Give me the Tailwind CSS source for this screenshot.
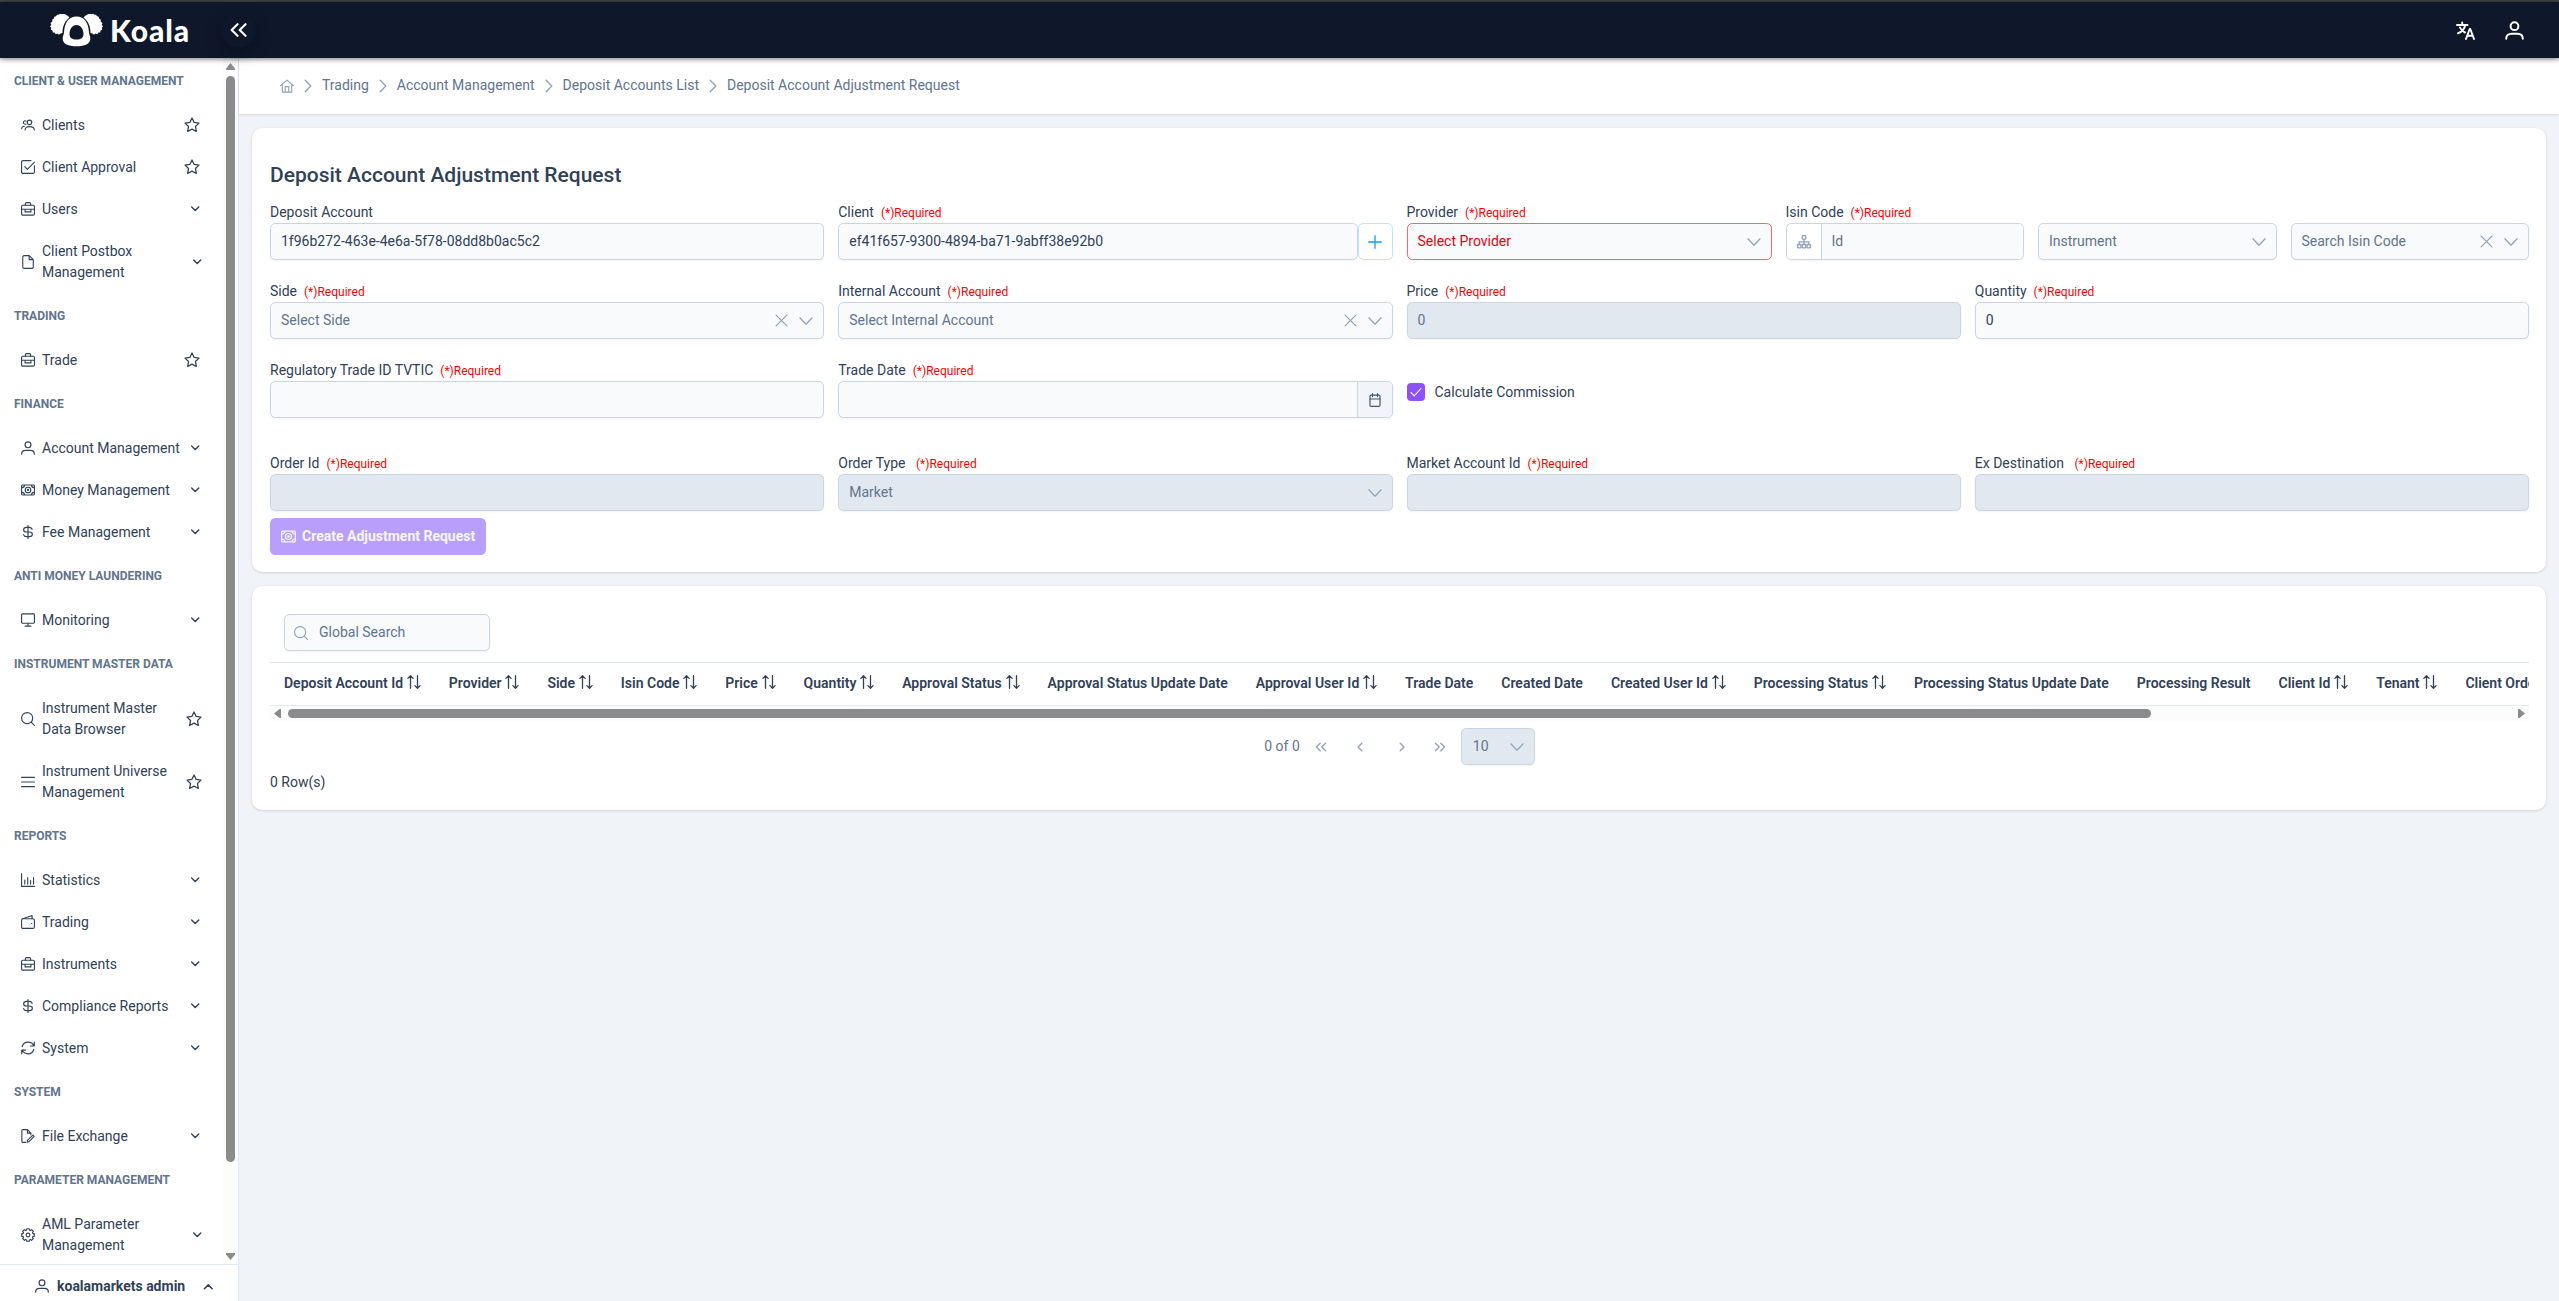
<!DOCTYPE html>
<html lang="en" class="text-[14px]">
<head>
    <meta charset="UTF-8">
    <meta name="viewport" content="width=device-width, initial-scale=1.0">
    <title>Deposit Account Adjustment Request - Koala</title>
    <script src="https://cdn.jsdelivr.net/npm/@tailwindcss/browser@4"></script>
</head>
<body class="h-screen overflow-hidden bg-[#f0f3f8] font-[Roboto,sans-serif] text-base leading-[21px] text-slate-700 flex flex-col">
    <!-- Icon sprite -->
    <svg class="hidden">
        <symbol id="i-users" viewBox="0 0 24 24" fill="none" stroke="currentColor" stroke-width="1.9" stroke-linecap="round" stroke-linejoin="round"><circle cx="14.5" cy="7.5" r="3.800"/><path d="M7 20.500c0-4 3-5.800 7.500-5.800s8.300 1.800 8.300 5.800M8.800 5.300a3 3 0 1 0-.6 5.200M1.200 18.500c0-3 1.800-4.300 4.800-4.300"/></symbol>
        <symbol id="i-check-square" viewBox="0 0 24 24" fill="none" stroke="currentColor" stroke-width="1.900" stroke-linecap="round" stroke-linejoin="round"><path d="M17 1H3.500A2.500 2.500 0 0 0 1 3.500v17A2.500 2.500 0 0 0 3.500 23h17a2.500 2.500 0 0 0 2.500-2.500V10"/><path d="M6.500 11.500l4.500 4.500L23 3.500"/></symbol>
        <symbol id="i-briefcase" viewBox="0 0 24 24" fill="none" stroke="currentColor" stroke-width="1.900" stroke-linecap="round" stroke-linejoin="round"><rect x="1" y="5.500" width="22" height="17" rx="2"/><path d="M7.500 5.500V3a2 2 0 0 1 2-2h5a2 2 0 0 1 2 2v2.500M1 12.500h22M7 12.500v4.500h10v-4.500"/></symbol>
        <symbol id="i-file" viewBox="0 0 24 24" fill="none" stroke="currentColor" stroke-width="1.900" stroke-linecap="round" stroke-linejoin="round"><path d="M14 1H5.500A2.500 2.500 0 0 0 3 3.500v17A2.500 2.500 0 0 0 5.500 23h13a2.500 2.500 0 0 0 2.500-2.500V8zM14 1v7h7"/></symbol>
        <symbol id="i-user" viewBox="0 0 24 24" fill="none" stroke="currentColor" stroke-width="2" stroke-linecap="round"><circle cx="12" cy="6.500" r="5"/><path d="M1.200 22.500v-1C1.200 18 4 16 8 16h8c4 0 6.800 2 6.800 5.500v1"/></symbol>
        <symbol id="i-money" viewBox="0 0 24 24" fill="none" stroke="currentColor" stroke-width="1.900" stroke-linejoin="round"><rect x="1" y="3.500" width="22" height="17" rx="1.500"/><circle cx="12" cy="12" r="4.800"/><circle cx="12" cy="12" r="1"/><path d="M1 8c3 0 5-1.500 5-4.500M23 8c-3 0-5-1.500-5-4.500M1 16c3 0 5 1.500 5 4.500M23 16c-3 0-5 1.500-5 4.500"/></symbol>
        <symbol id="i-dollar" viewBox="0 0 24 24" fill="none" stroke="currentColor" stroke-width="2" stroke-linecap="round"><path d="M12 1v22M19 7.500C18.500 5 16.500 4 14 4h-4.500C6.500 4 4.500 5.500 4.500 8s2 4 5 4h5c3 0 5 1.500 5 4s-2 4-5 4h-5C7 20 5 19 4.500 16.500"/></symbol>
        <symbol id="i-desktop" viewBox="0 0 24 24" fill="none" stroke="currentColor" stroke-width="1.900" stroke-linecap="round" stroke-linejoin="round"><rect x="1" y="1.500" width="22" height="16" rx="1.500"/><path d="M12 17.500V22.500M7 22.500h10"/></symbol>
        <symbol id="i-search" viewBox="0 0 24 24" fill="none" stroke="currentColor" stroke-width="1.900" stroke-linecap="round"><circle cx="10.500" cy="10.500" r="9.500"/><path d="M17.500 17.500L23 23"/></symbol>
        <symbol id="i-bars" viewBox="0 0 24 24" fill="none" stroke="currentColor" stroke-width="2" stroke-linecap="round"><path d="M1 4h22M1 12h22M1 20h22"/></symbol>
        <symbol id="i-chart" viewBox="0 0 24 24" fill="none" stroke="currentColor" stroke-width="1.900" stroke-linecap="round"><path d="M1 1v22h22M6.500 12v7M11.500 8v11M16.500 13v6M21.500 8v11"/></symbol>
        <symbol id="i-wallet" viewBox="0 0 24 24" fill="none" stroke="currentColor" stroke-width="1.900" stroke-linecap="round" stroke-linejoin="round"><rect x="1" y="6.500" width="22" height="16.500" rx="2.500"/><path d="M3 6.500L19 1v5.500M17.800 14.500h.8"/></symbol>
        <symbol id="i-sync" viewBox="0 0 24 24" fill="none" stroke="currentColor" stroke-width="2" stroke-linecap="round" stroke-linejoin="round"><path d="M2 9.500C3.500 4.500 7.500 2 12 2c4.500 0 8 2 10.500 6.500M22.700 2v6.500H16M22 14.500C20.500 19.500 16.500 22 12 22c-4.500 0-8-2-10.500-6.500M1.300 22v-6.500H8"/></symbol>
        <symbol id="i-file-edit" viewBox="0 0 24 24" fill="none" stroke="currentColor" stroke-width="1.900" stroke-linecap="round" stroke-linejoin="round"><path d="M8 23H3.500A2 2 0 0 1 1.500 21V3A2 2 0 0 1 3.500 1H11l6 6v3M11 1v6h6M20.500 10.500l2 2L14 21.500l-3.500 1 .8-3.500z"/></symbol>
        <symbol id="i-cog" viewBox="0 0 24 24" fill="none" stroke="currentColor" stroke-width="1.900" stroke-linejoin="round"><circle cx="12" cy="12" r="3.200"/><path d="M20.400 9.600L22.800 9.700V14.300L20.400 14.400L19.600 16.200L21.200 18L18 21.200L16.200 19.600L14.400 20.400L14.300 22.800H9.700L9.600 20.400L7.800 19.600L6 21.200L2.800 18L4.400 16.200L3.600 14.400L1.200 14.300V9.700L3.600 9.600L4.400 7.800L2.800 6L6 2.800L7.800 4.400L9.600 3.600L9.700 1.200H14.300L14.400 3.600L16.200 4.400L18 2.800L21.200 6L19.600 7.800z"/></symbol>
        <symbol id="i-star" viewBox="0 0 24 24" fill="none" stroke="currentColor" stroke-width="1.900" stroke-linejoin="round"><path d="M12 1.500l3.200 6.700 7.300 1-5.300 5.100 1.300 7.400L12 18.200l-6.500 3.500 1.300-7.400L1.500 9.200l7.300-1z"/></symbol>
        <symbol id="i-down" viewBox="0 0 24 24" fill="none" stroke="currentColor" stroke-width="2.100" stroke-linecap="round" stroke-linejoin="round"><path d="M1.500 6.500L12 17.500L22.500 6.500"/></symbol>
        <symbol id="i-down-bold" viewBox="0 0 24 24" fill="none" stroke="currentColor" stroke-width="3.400" stroke-linecap="round" stroke-linejoin="round"><path d="M4 7l8.500 8.500L21 7"/></symbol>
        <symbol id="i-x" viewBox="0 0 24 24" fill="none" stroke="currentColor" stroke-width="2.200" stroke-linecap="round"><path d="M2 2l20 20M22 2L2 22"/></symbol>
        <symbol id="i-right" viewBox="0 0 14 14" fill="none" stroke="currentColor" stroke-width="1.300" stroke-linecap="round" stroke-linejoin="round"><path d="M4.200 1.300l5.600 5.700l-5.600 5.700"/></symbol>
        <symbol id="i-angle" viewBox="0 0 14 14" fill="none" stroke="currentColor" stroke-width="1.300" stroke-linecap="round" stroke-linejoin="round"><path d="M5.200 3.200L9 7l-3.800 3.800"/></symbol>
        <symbol id="i-angles" viewBox="0 0 14 14" fill="none" stroke="currentColor" stroke-width="1.300" stroke-linecap="round" stroke-linejoin="round"><path d="M2.400 3.200L6.200 7l-3.800 3.800M7.800 3.200L11.600 7l-3.800 3.800"/></symbol>
        <symbol id="i-sort" viewBox="0 0 14 14" fill="none" stroke="currentColor" stroke-width="1.300" stroke-linecap="round" stroke-linejoin="round"><path d="M3.500 13.300V.8M.9 3.400L3.500.8l2.600 2.600M10.500.7v12.500M7.900 10.600l2.600 2.600l2.600-2.600"/></symbol>
    </svg>

    <div class="h-[2px] shrink-0 bg-[#434343]"></div>

    <!-- Topbar -->
    <header class="relative z-10 flex h-14 min-h-[56px] shrink-0 items-center bg-slate-900 text-white shadow-[0_1px_5px_rgba(0,0,0,0.55)]">
        <div class="flex w-[221px] items-center pl-[49px]">
            <svg class="h-[34px] w-[55px] shrink-0" viewBox="0 0 55 34">
                <path fill="#fff" d="M19 3C17 1 14 .6 12 1.200L11 .8 9.500 1.800 8 1.800 7 3.200 5.300 3.800 4.900 5.500 3.200 6.800 3.300 8.500 1.500 10l.8 1.700L1 13.500l1.300 1.300-.5 1.900 1.700.8.300 2 1.700.1 1.300 1.700 1.600-.7 1.600 1.100L11.500 20.500 13.500 20C13.500 14 15 9 20.500 4.500z"/>
                <path fill="#fff" d="M36 3C38 1 41 .6 43 1.200L44 .8 45.500 1.800 47 1.800 48 3.200 49.700 3.800 50.100 5.500 51.800 6.800 51.700 8.500 53.500 10l-.8 1.700L54 13.500l-1.300 1.300.5 1.900-1.700.8-.3 2-1.700.1-1.300 1.700-1.600-.7-1.600 1.100L43.500 20.500 41.500 20C41.500 14 40 9 34.500 4.500z"/>
                <path fill="#fff" fill-rule="evenodd" d="M27.500 3.500c-8 0-12 6.500-12.500 16-.3 3-1.300 3-1.300 6 0 5.500 5.500 7.800 13.800 7.800s13.800-2.300 13.800-7.800c0-3-1-3-1.300-6-.5-9.500-4.500-16-12.500-16zm0 8.500c4.500 0 7 4.500 7 9 0 3.800-2.500 5.500-7 5.500s-7-1.700-7-5.500c0-4.500 2.500-9 7-9z"/>
            </svg>
            <span class="ml-[6px] font-[Lato,sans-serif] text-[30px] leading-[34px] font-black tracking-[0.9px]">Koala</span>
        </div>
        <button class="flex size-[35px] items-center justify-center rounded-full bg-slate-900 shadow-[0_6px_16px_rgba(0,0,0,0.3)]">
            <svg class="h-[14px] w-[17px]" viewBox="0 0 17 14" fill="none" stroke="currentColor" stroke-width="2.200" stroke-linecap="round" stroke-linejoin="round"><path d="M7.500 1.200L1.700 7l5.800 5.800M15.500 1.200L9.700 7l5.800 5.800"/></svg>
        </button>
        <div class="ml-auto flex items-center gap-[30px] pr-[35px]">
            <svg class="h-[19px] w-[19px]" viewBox="0 0 19 19" fill="none" stroke="currentColor" stroke-width="1.900" stroke-linecap="round" stroke-linejoin="round"><path d="M1 4h10.500M6.200 1.500V4M9.300 4C8.500 8 5.500 11 2 12.300M4 6.500c1 2.500 2.500 4 5 5M10 18l3.700-10h.6L18 18M11.300 14.800h5.400"/></svg>
            <svg class="h-[19px] w-[19px]" viewBox="0 0 19 19" fill="none" stroke="currentColor" stroke-width="2" stroke-linecap="round"><circle cx="9.500" cy="5.200" r="3.900"/><path d="M1.200 17.700c0-3.200 2-5 5.300-5h6c3.300 0 5.300 1.800 5.300 5"/></svg>
        </div>
    </header>

    <div class="flex min-h-0 flex-1">
        <!-- Sidebar -->
        <aside class="flex w-[239px] shrink-0 flex-col border-r border-slate-200 bg-white">
            <div class="flex min-h-0 flex-1">
                <nav id="menu" class="w-[223px] shrink-0 overflow-hidden"></nav>
                <div class="flex w-[15px] flex-col items-center bg-[#fcfcfc] pt-[5px] pb-[4px]">
                    <svg class="h-[7px] w-[9px] fill-[#8b8b8b]" viewBox="0 0 9 7"><path d="M4.500 0L9 5.500V7H0V5.500z"/></svg>
                    <div class="mt-[6px] h-[1086px] w-[9px] rounded-full bg-[#8b8b8b]"></div>
                    <svg class="mt-auto h-[7px] w-[9px] fill-[#8b8b8b]" viewBox="0 0 9 7"><path d="M4.500 7L9 1.500V0H0v1.500z"/></svg>
                </div>
            </div>
            <div class="flex h-[37px] shrink-0 items-center border-t border-slate-200 pt-[6px] pl-[35px] font-bold">
                <svg class="size-[14px]"><use href="#i-user"/></svg>
                <span class="ml-[8px] w-[146px]">koalamarkets admin</span>
                <svg class="h-[11px] w-[11px] rotate-180"><use href="#i-down-bold"/></svg>
            </div>
        </aside>

        <main class="flex min-w-0 flex-1 flex-col">
            <!-- Breadcrumb -->
            <div class="flex h-[56px] shrink-0 items-center bg-white pb-[1px] pl-[41px] text-slate-500 shadow-[0_1px_2px_rgba(0,0,0,0.12)]">
                <svg class="size-[14px] text-slate-400" viewBox="0 0 24 24" fill="none" stroke="currentColor" stroke-width="1.900" stroke-linecap="round" stroke-linejoin="round"><path d="M1 11.500L12 2l11 9.500M4 9.500V22.500h16V9.500M9 22.500V13h6v9.500"/></svg>
                <svg class="mx-[7px] size-[14px] text-slate-400"><use href="#i-right"/></svg>
                <span>Trading</span>
                <svg class="mx-[7px] size-[14px] text-slate-400"><use href="#i-right"/></svg>
                <span>Account Management</span>
                <svg class="mx-[7px] size-[14px] text-slate-400"><use href="#i-right"/></svg>
                <span>Deposit Accounts List</span>
                <svg class="mx-[7px] size-[14px] text-slate-400"><use href="#i-right"/></svg>
                <span>Deposit Account Adjustment Request</span>
            </div>

            <!-- Request form -->
            <section class="mt-4 mr-[13px] ml-[13px] h-[444px] shrink-0 rounded-xl bg-white pt-[31px] pr-[17px] pl-[18px] shadow-[0_1px_3px_rgba(0,0,0,0.14)]">
                <h1 class="text-[21px] leading-[32px] font-medium">Deposit Account Adjustment Request</h1>
                <div class="mt-[11px] grid grid-cols-4 gap-x-4 gap-y-[21px]">
                    <div>
                        <label class="block h-[21px]">Deposit Account</label>
                        <div class="flex h-[37px] items-center rounded-md border border-slate-300 bg-slate-50 px-[10px] shadow-xs">1f96b272-463e-4e6a-5f78-08dd8b0ac5c2</div>
                    </div>
                    <div>
                        <label class="block h-[21px]">Client <span class="ml-1 text-[12px] text-[#ff0000]">(*)Required</span></label>
                        <div class="flex">
                            <div class="flex h-[37px] flex-1 items-center rounded-md border border-slate-300 bg-slate-50 px-[10px] shadow-xs">ef41f657-9300-4894-ba71-9abff38e92b0</div>
                            <button class="flex h-[37px] w-[35px] items-center justify-center rounded-md border border-sky-200 text-sky-500">
                                <svg class="size-[14px]" viewBox="0 0 14 14" stroke="currentColor" stroke-width="1.300" stroke-linecap="round"><path d="M7 .7v12.600M.7 7h12.600"/></svg>
                            </button>
                        </div>
                    </div>
                    <div class="col-span-2 flex gap-4">
                        <div class="w-[365px]">
                            <label class="block h-[21px]">Provider <span class="ml-1 text-[12px] text-[#ff0000]">(*)Required</span></label>
                            <div class="flex h-[37px] items-center rounded-md border border-red-400 bg-slate-50 px-[10px] text-red-600 shadow-xs">
                                <span class="flex-1">Select Provider</span>
                                <svg class="size-[14px] text-slate-400"><use href="#i-down"/></svg>
                            </div>
                        </div>
                        <div class="flex-1">
                            <label class="block h-[21px]">Isin Code <span class="ml-1 text-[12px] text-[#ff0000]">(*)Required</span></label>
                            <div class="grid grid-cols-3 gap-4 text-slate-500">
                                <div class="flex h-[37px] rounded-md border border-slate-300 shadow-xs">
                                    <div class="flex w-[35px] items-center justify-center border-r border-slate-300 text-slate-400">
                                        <svg class="size-[14px]" viewBox="0 0 14 14" fill="none" stroke="currentColor" stroke-width="1.300"><rect x="5.200" y=".7" width="3.600" height="3.400" rx=".5"/><rect x=".6" y="9.500" width="3.400" height="3.400" rx=".5"/><rect x="5.300" y="9.500" width="3.400" height="3.400" rx=".5"/><rect x="10" y="9.500" width="3.400" height="3.400" rx=".5"/><path d="M7 4.100v5.400M2.300 9.500V6.800h9.400v2.700"/></svg>
                                    </div>
                                    <div class="flex flex-1 items-center rounded-r-md bg-slate-50 px-[10px]">Id</div>
                                </div>
                                <div class="flex h-[37px] items-center rounded-md border border-slate-300 bg-slate-50 px-[10px] shadow-xs">
                                    <span class="flex-1">Instrument</span>
                                    <svg class="size-[14px] text-slate-400"><use href="#i-down"/></svg>
                                </div>
                                <div class="flex h-[37px] items-center rounded-md border border-slate-300 bg-slate-50 px-[10px] shadow-xs">
                                    <span class="flex-1">Search Isin Code</span>
                                    <svg class="mr-[11px] size-[13px] text-slate-400"><use href="#i-x"/></svg>
                                    <svg class="size-[14px] text-slate-400"><use href="#i-down"/></svg>
                                </div>
                            </div>
                        </div>
                    </div>

                    <div>
                        <label class="block h-[21px]">Side <span class="ml-1 text-[12px] text-[#ff0000]">(*)Required</span></label>
                        <div class="flex h-[37px] items-center rounded-md border border-slate-300 bg-slate-50 px-[10px] text-slate-500 shadow-xs">
                            <span class="flex-1">Select Side</span>
                            <svg class="mr-[11px] size-[13px] text-slate-400"><use href="#i-x"/></svg>
                            <svg class="size-[14px] text-slate-400"><use href="#i-down"/></svg>
                        </div>
                    </div>
                    <div>
                        <label class="block h-[21px]">Internal Account <span class="ml-1 text-[12px] text-[#ff0000]">(*)Required</span></label>
                        <div class="flex h-[37px] items-center rounded-md border border-slate-300 bg-slate-50 px-[10px] text-slate-500 shadow-xs">
                            <span class="flex-1">Select Internal Account</span>
                            <svg class="mr-[11px] size-[13px] text-slate-400"><use href="#i-x"/></svg>
                            <svg class="size-[14px] text-slate-400"><use href="#i-down"/></svg>
                        </div>
                    </div>
                    <div>
                        <label class="block h-[21px]">Price <span class="ml-1 text-[12px] text-[#ff0000]">(*)Required</span></label>
                        <div class="flex h-[37px] items-center rounded-md border border-slate-300 bg-slate-200 px-[10px] text-slate-500 shadow-xs">0</div>
                    </div>
                    <div>
                        <label class="block h-[21px]">Quantity <span class="ml-1 text-[12px] text-[#ff0000]">(*)Required</span></label>
                        <div class="flex h-[37px] items-center rounded-md border border-slate-300 bg-slate-50 px-[10px] shadow-xs">0</div>
                    </div>

                    <div>
                        <label class="block h-[21px]">Regulatory Trade ID TVTIC <span class="ml-1 text-[12px] text-[#ff0000]">(*)Required</span></label>
                        <div class="h-[37px] rounded-md border border-slate-300 bg-slate-50 shadow-xs"></div>
                    </div>
                    <div>
                        <label class="block h-[21px]">Trade Date <span class="ml-1 text-[12px] text-[#ff0000]">(*)Required</span></label>
                        <div class="flex h-[37px] overflow-hidden rounded-md border border-slate-300 bg-slate-50 shadow-xs">
                            <div class="flex-1"></div>
                            <button class="flex w-[35px] items-center justify-center border-l border-slate-300 bg-slate-100 text-slate-600">
                                <svg class="size-[14px]" viewBox="0 0 14 14" fill="none" stroke="currentColor" stroke-width="1.200" stroke-linecap="round"><rect x="2" y="2.200" width="10" height="11.200" rx="1.200"/><path d="M2 6h10M4.500.6v3M9.500.6v3"/></svg>
                            </button>
                        </div>
                    </div>
                    <div class="col-span-2 flex items-start pt-[23px]">
                        <span class="flex size-[18px] items-center justify-center rounded-[4px] bg-violet-500 text-white">
                            <svg class="size-[12px]" viewBox="0 0 12 12" fill="none" stroke="currentColor" stroke-width="1.100" stroke-linecap="round" stroke-linejoin="round"><path d="M1 6.500l3.200 3.300L11 2.500"/></svg>
                        </span>
                        <span class="ml-[10px] leading-[19px]">Calculate Commission</span>
                    </div>

                    <div class="mt-4">
                        <label class="block h-[21px]">Order Id <span class="ml-1 text-[12px] text-[#ff0000]">(*)Required</span></label>
                        <div class="h-[37px] rounded-md border border-slate-300 bg-slate-200 shadow-xs"></div>
                    </div>
                    <div class="mt-4">
                        <label class="block h-[21px]">Order Type <span class="ml-2 text-[12px] text-[#ff0000]">(*)Required</span></label>
                        <div class="flex h-[37px] items-center rounded-md border border-slate-300 bg-slate-200 px-[10px] text-slate-500 shadow-xs">
                            <span class="flex-1">Market</span>
                            <svg class="size-[14px] text-slate-400"><use href="#i-down"/></svg>
                        </div>
                    </div>
                    <div class="mt-4">
                        <label class="block h-[21px]">Market Account Id <span class="ml-1 text-[12px] text-[#ff0000]">(*)Required</span></label>
                        <div class="h-[37px] rounded-md border border-slate-300 bg-slate-200 shadow-xs"></div>
                    </div>
                    <div class="mt-4">
                        <label class="block h-[21px]">Ex Destination <span class="ml-2 text-[12px] text-[#ff0000]">(*)Required</span></label>
                        <div class="h-[37px] rounded-md border border-slate-300 bg-slate-200 shadow-xs"></div>
                    </div>
                </div>
                <button class="mt-[7px] flex h-[37px] w-[216px] items-center gap-[6px] rounded-md bg-[#b89ffb] pl-[11px] font-bold text-white/90">
                    <svg class="size-[15px]"><use href="#i-money"/></svg>
                    <span class="whitespace-nowrap">Create Adjustment Request</span>
                </button>
            </section>

            <!-- Requests table -->
            <section class="mx-[13px] mt-4 h-[224px] shrink-0 rounded-xl bg-white pt-[28px] pr-[17px] pl-[18px] shadow-[0_1px_3px_rgba(0,0,0,0.14)]">
                <div class="ml-4 flex h-[37px] w-[206px] items-center rounded-md border border-slate-300 bg-slate-50 px-[9px] text-slate-500 shadow-xs">
                    <svg class="size-[14px] text-slate-400"><use href="#i-search"/></svg>
                    <span class="ml-[11px]">Global Search</span>
                </div>
                <div class="mt-[11px] overflow-hidden border-y border-slate-200">
                    <div id="columns" class="flex h-[42px] w-max items-center pb-[2px] font-semibold"></div>
                </div>
                <div class="flex h-[15px] items-center bg-[#fcfcfc] pr-[4px] pl-[4px]">
                    <svg class="h-[9px] w-[7px] fill-[#8b8b8b]" viewBox="0 0 7 9"><path d="M0 4.500L5.500 0H7v9H5.500z"/></svg>
                    <div class="ml-[7px] h-[9px] w-[1863px] rounded-full bg-[#8b8b8b]"></div>
                    <svg class="ml-auto h-[9px] w-[7px] fill-[#8b8b8b]" viewBox="0 0 7 9"><path d="M7 4.500L1.500 0H0v9h1.500z"/></svg>
                </div>
                <div class="mt-[7px] flex items-center justify-center text-slate-500">
                    <span class="mr-[14px]">0 of 0</span>
                    <svg class="mr-[25px] size-[14px] rotate-180 text-slate-400"><use href="#i-angles"/></svg>
                    <svg class="mr-[28px] size-[14px] rotate-180 text-slate-400"><use href="#i-angle"/></svg>
                    <svg class="mr-[24px] size-[14px] text-slate-400"><use href="#i-angle"/></svg>
                    <svg class="mr-[14px] size-[14px] text-slate-400"><use href="#i-angles"/></svg>
                    <div class="flex h-[37px] w-[74px] items-center justify-between rounded-md border border-slate-300 bg-slate-200 pr-[10px] pl-[11px] shadow-xs">
                        <span>10</span>
                        <svg class="size-[14px] text-slate-400"><use href="#i-down"/></svg>
                    </div>
                </div>
                <div class="mt-[7px]">0 Row(s)</div>
            </section>
        </main>
    </div>

    <script>
        // kind: star = leaf page, down = expandable group
        const sections = [
            ['CLIENT & USER MANAGEMENT', [['users', 'Clients', 'star'], ['check-square', 'Client Approval', 'star'], ['briefcase', 'Users', 'down'], ['file', 'Client Postbox<br>Management', 'down']]],
            ['TRADING', [['briefcase', 'Trade', 'star']]],
            ['FINANCE', [['user', 'Account Management', 'down'], ['money', 'Money Management', 'down'], ['dollar', 'Fee Management', 'down']]],
            ['ANTI MONEY LAUNDERING', [['desktop', 'Monitoring', 'down']]],
            ['INSTRUMENT MASTER DATA', [['search', 'Instrument Master<br>Data Browser', 'star'], ['bars', 'Instrument Universe<br>Management', 'star']]],
            ['REPORTS', [['chart', 'Statistics', 'down'], ['wallet', 'Trading', 'down'], ['briefcase', 'Instruments', 'down'], ['dollar', 'Compliance Reports', 'down'], ['sync', 'System', 'down']]],
            ['SYSTEM', [['file-edit', 'File Exchange', 'down']]],
            ['PARAMETER MANAGEMENT', [['cog', 'AML Parameter<br>Management', 'down']]]
        ];

        document.getElementById('menu').innerHTML = sections.map(([title, items]) => `
            <div class="h-[46px] pt-[13px] pl-4 text-[12px] font-bold text-slate-500">${title}</div>
            ${items.map(([icon, label, kind]) => {
                const tall = label.includes('<br>');
                const end = kind === 'star'
                    ? `<svg class="size-[16px] shrink-0"><use href="#i-star"/></svg>`
                    : `<svg class="size-[10px] shrink-0"><use href="#i-down-bold"/></svg>`;
                return `
                <div class="flex items-center py-3 pl-[21px] ${tall ? 'pr-[21px]' : 'pr-[23px]'}">
                    <svg class="size-[14px] shrink-0"><use href="#i-${icon}"/></svg>
                    <span class="ml-2 flex-1 whitespace-nowrap">${label}</span>
                    ${end}
                </div>`;
            }).join('')}`).join('');

        // Columns marked with * are sortable
        const columns = ['Deposit Account Id*', 'Provider*', 'Side*', 'Isin Code*', 'Price*', 'Quantity*', 'Approval Status*',
            'Approval Status Update Date', 'Approval User Id*', 'Trade Date', 'Created Date', 'Created User Id*',
            'Processing Status*', 'Processing Status Update Date', 'Processing Result', 'Client Id*', 'Tenant*', 'Client Order Id*'];

        document.getElementById('columns').innerHTML = columns.map(c => `
            <div class="flex items-center px-4 whitespace-nowrap">
                ${c.replace('*', '')}${c.endsWith('*') ? '<svg class="mb-[3px] ml-[3.8px] size-[14px]"><use href="#i-sort"/></svg>' : ''}
            </div>`).join('');
    </script>
</body>
</html>
